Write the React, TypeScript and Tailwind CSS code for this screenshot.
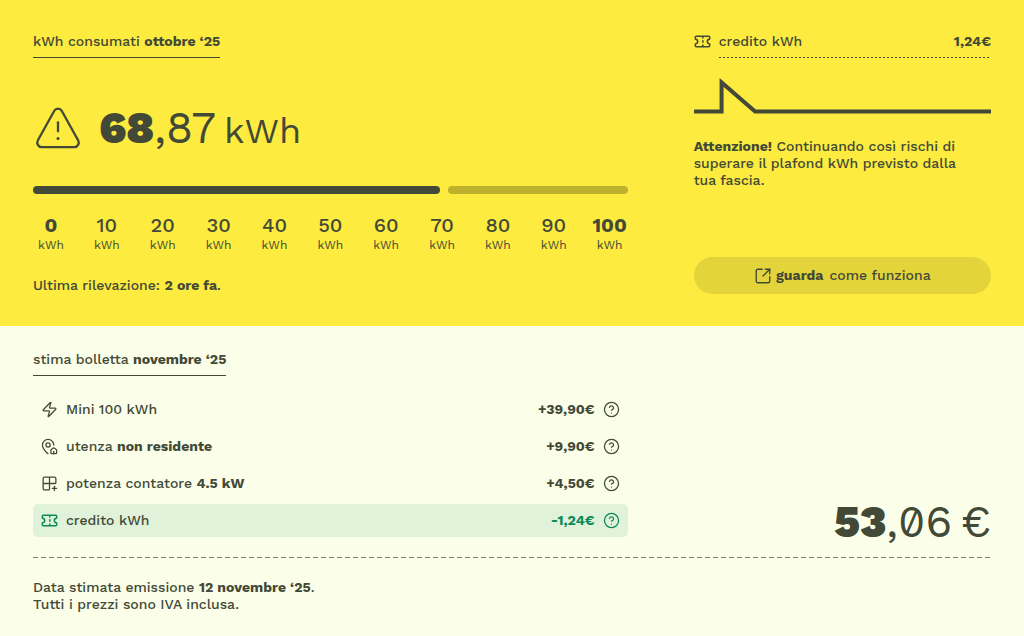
import type { ReactNode } from "react";
import { CircleHelp, Grid2x2Plus, MapPinHouse, SquareArrowOutUpRight, Zap } from "lucide-react";

function TicketIcon({ className }: { className: string }) {
  return (
    <svg viewBox="0 0 18 18" className={className} fill="none" stroke="currentColor" strokeWidth="1.600" strokeLinejoin="round" strokeLinecap="round" aria-hidden="true">
      <path d="M2.400 3.400h13.200a1 1 0 0 1 1 1v1.900c-1.500.3-2.500 1.400-2.500 2.700s1 2.400 2.500 2.700v1.900a1 1 0 0 1-1 1H2.400a1 1 0 0 1-1-1v-1.900c1.500-.3 2.500-1.400 2.500-2.700s-1-2.400-2.500-2.700V4.400a1 1 0 0 1 1-1Z" />
      <path d="M9.400 4v1.300M9.400 8.300v1.400M9.400 12.700V14" />
    </svg>
  );
}

function WarningIcon() {
  return (
    <svg viewBox="0 0 50 50" className="size-[50px] shrink-0" fill="none" stroke="currentColor" strokeWidth="2.300" strokeLinecap="round" aria-hidden="true">
      <path d="M21.300 8.800 4.900 38.200c-1.700 3.200.3 6.900 3.800 6.900h32.600c3.500 0 5.500-3.700 3.800-6.900L28.700 8.800c-1.700-3-5.700-3-7.400 0Z" />
      <path d="M25 20.300v9" />
      <circle cx="25" cy="36.500" r="1.500" fill="currentColor" stroke="none" />
    </svg>
  );
}

function Heading({ label, month }: { label: string; month: string }) {
  return (
    <h2 className="self-start border-b border-current pb-[7px]">
      {label} <strong className="font-bold">{month}</strong>
    </h2>
  );
}

const USED = 68.87;
const TICKS = [0, 10, 20, 30, 40, 50, 60, 70, 80, 90, 100];

type Item = { id: string; icon: ReactNode; label: ReactNode; price: string; credit?: boolean };

const ITEMS: Item[] = [
  { id: "Mini 100 kWh", icon: <Zap className="size-[17px]" strokeWidth={1.8} />, label: "Mini 100 kWh", price: "+39,90€" },
  {
    id: "utenza",
    icon: <MapPinHouse className="size-[17px]" strokeWidth={1.8} />,
    label: (
      <>
        utenza <strong className="font-bold">non residente</strong>
      </>
    ),
    price: "+9,90€",
  },
  {
    id: "potenza contatore",
    icon: <Grid2x2Plus className="size-[17px]" strokeWidth={1.8} />,
    label: (
      <>
        potenza contatore <strong className="font-bold">4.5 kW</strong>
      </>
    ),
    price: "+4,50€",
  },
  { id: "credito kWh", icon: <TicketIcon className="size-[17px] text-[#0b8a56]" />, label: "credito kWh", price: "-1,24€", credit: true },
];

export default function App() {
  return (
    <main className="min-h-screen bg-[#fbffe9] font-['Work_Sans','Inter',sans-serif] text-[14px] leading-[17px] font-medium text-[#434937]">
      <section className="grid grid-cols-[2fr_1fr] gap-[66px] bg-[#fdeb3f] px-[33px] pt-[33px] pb-8">
        <div className="flex flex-col">
          <Heading label="kWh consumati" month="ottobre ‘25" />

          <div className="mt-[42px] flex items-center gap-4">
            <WarningIcon />
            <p className="pt-[6px] text-[44px] leading-[44px] font-normal">
              <span className="font-black">68</span>,87<span className="ml-2 text-[36px]">kWh</span>
            </p>
          </div>

          <div className="mt-[33px] flex h-2 gap-2">
            <div className="rounded-full bg-[#434937]" style={{ width: `calc(${USED}% - 3px)` }} />
            <div className="flex-1 rounded-full bg-[#beb12e]" />
          </div>

          <ol className="mt-[19px] flex justify-between">
            {TICKS.map((t) => (
              <li key={t} className="flex w-9 flex-col items-center">
                <span className={t === 0 || t === 100 ? "text-[20px] leading-6 font-bold" : "text-[20px] leading-6"}>{t}</span>
                <span className="text-[12px] leading-4 font-normal">kWh</span>
              </li>
            ))}
          </ol>

          <p className="mt-6">
            Ultima rilevazione: <strong className="font-bold">2 ore fa</strong>.
          </p>
        </div>

        <div className="flex flex-col">
          <div className="flex gap-2">
            <TicketIcon className="size-[17px] shrink-0" />
            <div className="flex-1">
              <div className="flex justify-between pb-[7px]">
                <span>credito kWh</span>
                <strong className="font-bold">1,24€</strong>
              </div>
              <div className="h-px bg-[repeating-linear-gradient(90deg,#434937_0_2px,transparent_2px_4px)]" />
            </div>
          </div>

          <svg viewBox="0 0 297 38" className="mt-[19px] w-full" fill="none" stroke="currentColor" strokeWidth="4" strokeMiterlimit="10" aria-hidden="true">
            <path d="M0 34.500H27.500V5.500L61 34.500H297" />
          </svg>

          <p className="mt-[23px] pr-4">
            <strong className="font-bold">Attenzione!</strong> Continuando così rischi di superare il plafond kWh previsto dalla tua fascia.
          </p>

          <button type="button" className="mt-auto flex h-[37px] items-center justify-center rounded-full bg-[#e4d43b]">
            <SquareArrowOutUpRight className="mr-1 size-[18px]" strokeWidth={1.8} />
            <strong className="mr-[6px] font-bold">guarda</strong>
            <span>come funziona</span>
          </button>
        </div>
      </section>

      <section className="flex flex-col px-[33px] pt-[25px] pb-6">
        <div className="grid grid-cols-[2fr_1fr] gap-[66px] pb-5">
          <div className="flex flex-col">
            <Heading label="stima bolletta" month="novembre ‘25" />
            <ul className="mt-[17px] flex flex-col gap-1">
              {ITEMS.map((item) => (
                <li
                  key={item.id}
                  className={
                    item.credit
                      ? "flex h-[33px] items-center rounded-[5px] bg-[#e0f2da] px-2"
                      : "flex h-[33px] items-center px-2"
                  }
                >
                  {item.icon}
                  <span className="ml-2 flex-1">{item.label}</span>
                  <strong className={item.credit ? "font-bold text-[#0b8a56]" : "font-bold"}>{item.price}</strong>
                  <button type="button" aria-label={`Info ${item.id}`} className={item.credit ? "ml-2 text-[#0b8a56]" : "ml-2"}>
                    <CircleHelp className="size-[17px]" strokeWidth={1.8} />
                  </button>
                </li>
              ))}
            </ul>
          </div>
          <p className="self-end text-right text-[44px] leading-[30px] font-normal [font-feature-settings:'zero']">
            <span className="font-black">53</span>,06<span className="ml-2">€</span>
          </p>
        </div>

        <div className="h-px bg-[repeating-linear-gradient(90deg,#7f8372_0_5px,transparent_5px_8px)]" />

        <p className="mt-[21px]">
          Data stimata emissione <strong className="font-bold">12 novembre ‘25</strong>.
          <br />
          Tutti i prezzi sono IVA inclusa.
        </p>
      </section>
    </main>
  );
}
